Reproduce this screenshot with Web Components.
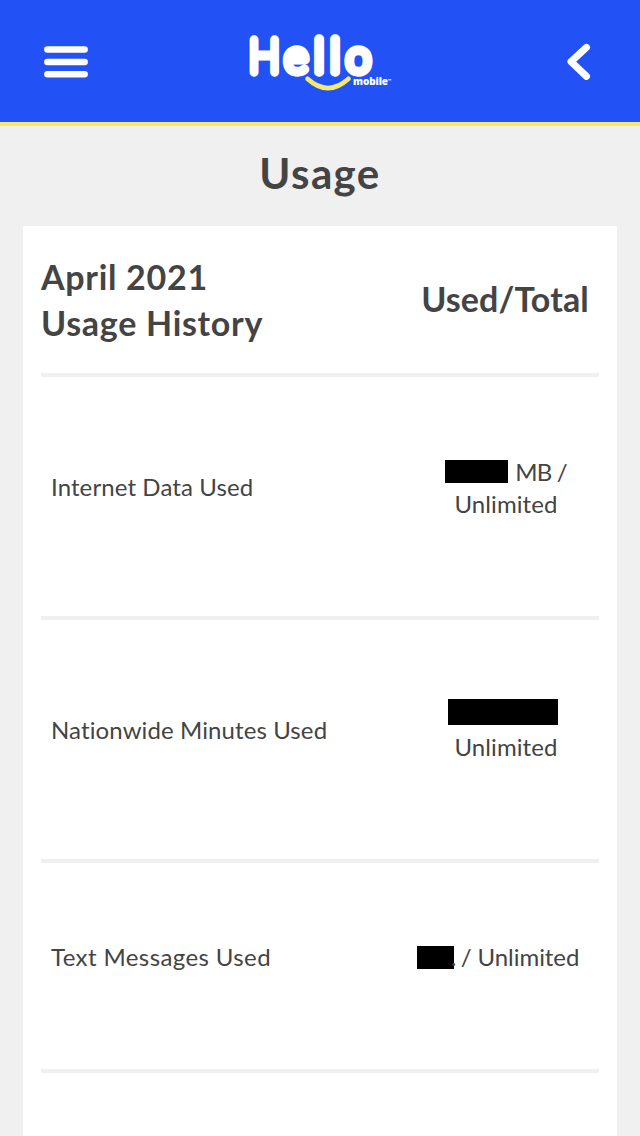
<!DOCTYPE html>
<html lang="en">
<head>
<meta charset="utf-8">
<title>Usage</title>
<style>
  body {
    margin: 0;
    height: 1136px;
    overflow: hidden;
    background: #f0f0f0;
    color: #444;
    font-family: Lato, "Noto Sans", sans-serif;
  }
</style>
</head>
<body>
<usage-page></usage-page>

<script>
class HelloLogo extends HTMLElement {
  constructor() {
    super();
    this.attachShadow({ mode: "open" });
    this.shadowRoot.innerHTML = `
      <style>
        :host { display: block; width: 150px; height: 80px; }
        svg { display: block; overflow: visible; }
        .name {
          fill: #fff;
          stroke: #fff;
          stroke-width: 9.4;
          stroke-linejoin: round;
          stroke-linecap: round;
          font: 100 46px Lato, sans-serif;
        }
        .round { font-size: 44px; }
        .sub { fill: #fff; font: 800 10px "Open Sans", sans-serif; }
      </style>
      <svg width="150" height="80" viewBox="245 22 150 80" role="img" aria-label="Hello mobile">
        <text class="name" y="72.4"><tspan x="249" textLength="30.5" lengthAdjust="spacingAndGlyphs">H</tspan><tspan class="round" x="284.8">e</tspan><tspan x="314.2">l</tspan><tspan x="330.2">l</tspan><tspan class="round" x="346.2">o</tspan></text>
        <path d="M307.5 78.8Q328 97.5 348.5 78.8" fill="none" stroke="#f6e96b" stroke-width="4.6" stroke-linecap="round"/>
        <text class="sub" x="353" y="85" textLength="35">mobile</text>
        <text class="sub" x="388" y="82" style="font-size:4px">™</text>
      </svg>
    `;
  }
}
customElements.define("hello-logo", HelloLogo);

class AppHeader extends HTMLElement {
  constructor() {
    super();
    this.attachShadow({ mode: "open" });
    this.shadowRoot.innerHTML = `
      <style>
        :host {
          display: flex;
          align-items: center;
          justify-content: space-between;
          box-sizing: border-box;
          height: 126px;
          padding: 2px 48px 0 43px;
          background: #2251f5;
          border-bottom: 4px solid #f6e96b;
        }
        svg { display: block; }
        hello-logo { margin-right: 16px; }
      </style>
      <svg width="46" height="34" viewBox="0 0 46 34" stroke="#fff" stroke-width="6.6" stroke-linecap="round">
        <path d="M4.4 4.5H41.6M4.4 17H41.6M4.4 29.3H41.6"/>
      </svg>
      <hello-logo></hello-logo>
      <svg width="26" height="38" viewBox="0 0 26 38" fill="none" stroke="#fff" stroke-width="7" stroke-linecap="round" stroke-linejoin="round">
        <path d="M20.5 4.4L5 18.6L20.5 33.4"/>
      </svg>
    `;
  }
}
customElements.define("app-header", AppHeader);

// black bar over a hidden value
class RedactedValue extends HTMLElement {
  constructor() {
    super();
    this.attachShadow({ mode: "open" });
    this.shadowRoot.innerHTML = `
      <style>
        :host {
          display: block;
          flex: none;
          width: var(--w);
          height: var(--h, 23px);
          background: #000;
        }
      </style>
    `;
  }
}
customElements.define("redacted-value", RedactedValue);

class UsageRow extends HTMLElement {
  constructor() {
    super();
    this.attachShadow({ mode: "open" });
    this.shadowRoot.innerHTML = `
      <style>
        :host {
          display: flex;
          align-items: center;
          box-sizing: border-box;
          height: 243px;
          padding: 0 0 18px 10px;
          border-bottom: 4px solid #f0f0f0;
          font-size: 24px;
          line-height: 32px;
          letter-spacing: 0.1px;
          white-space: nowrap;
        }
        :host([head]) {
          height: 151px;
          padding: 1px 0 0;
          font-size: 34px;
          font-weight: 700;
          line-height: 46px;
          letter-spacing: 0.7px;
        }
        .label { flex: 1; padding-bottom: 1px; }
        :host([head]) .label { padding: 0; }
        .value {
          display: flex;
          flex-direction: column;
          align-items: center;
          width: 186px;
        }
        :host([head]) .value {
          box-sizing: border-box;
          letter-spacing: 0.1px;
          padding: 0 2px 2px 0;
        }
      </style>
      <div class="label"><slot name="label"></slot></div>
      <div class="value"><slot></slot></div>
    `;
  }
}
customElements.define("usage-row", UsageRow);

class UsagePage extends HTMLElement {
  constructor() {
    super();
    this.attachShadow({ mode: "open" });
    this.shadowRoot.innerHTML = `
      <style>
        :host { display: block; }
        h1 {
          margin: 0;
          height: 100px;
          font-size: 42px;
          font-weight: 700;
          line-height: 94px;
          letter-spacing: 1.4px;
          text-align: center;
        }
        .card {
          box-sizing: border-box;
          height: 910px;
          margin: 0 23px;
          padding: 0 18px;
          background: #fff;
        }
        .line { display: flex; align-items: center; }
        .minutes { height: 32px; margin-right: 6px; padding-bottom: 5px; box-sizing: border-box; }
        .texts { height: 210px; }
        .texts .line { margin-right: 16px; letter-spacing: -0.05px; }
        .mb { margin-left: 7px; letter-spacing: -0.8px; }
        .dot { width: 10px; margin-left: -3px; }
      </style>
      <app-header></app-header>
      <h1><span>Usage</span></h1>
      <div class="card">
        <usage-row head>
          <div slot="label">
            <div>April 2021</div>
            <div>Usage History</div>
          </div>
          <span>Used/Total</span>
        </usage-row>
        <usage-row>
          <span slot="label">Internet Data Used</span>
          <div class="line"><redacted-value style="--w:63px"></redacted-value><span class="mb">MB /</span></div>
          <span>Unlimited</span>
        </usage-row>
        <usage-row>
          <span slot="label">Nationwide Minutes Used</span>
          <div class="line minutes"><redacted-value style="--w:110px;--h:26px"></redacted-value></div>
          <span>Unlimited</span>
        </usage-row>
        <usage-row class="texts">
          <span slot="label" style="letter-spacing:0.4px">Text Messages Used</span>
          <div class="line"><redacted-value style="--w:37px"></redacted-value><span class="dot">.</span><span>/ Unlimited</span></div>
        </usage-row>
      </div>
    `;
  }
}
customElements.define("usage-page", UsagePage);
</script>
</body>
</html>
